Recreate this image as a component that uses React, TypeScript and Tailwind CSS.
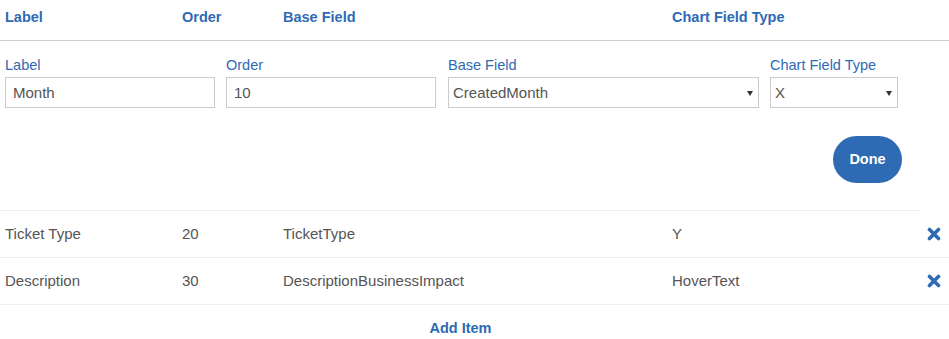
import React from 'react';

const blue = 'text-[#2f6ab4]';

const rows = [
  { label: 'Ticket Type', order: '20', base: 'TicketType', type: 'Y' },
  { label: 'Description', order: '30', base: 'DescriptionBusinessImpact', type: 'HoverText' },
];

const RemoveIcon = () => (
  <svg width="14" height="14" viewBox="0 0 14 14" className="block">
    <path d="M2.5 2.5 L11.5 11.5 M11.5 2.5 L2.5 11.5" stroke="#2f6ab4" strokeWidth="3.6" strokeLinecap="round" />
  </svg>
);

// small select arrow
const Caret = () => (
  <span className="absolute right-[5px] top-[13px] w-0 h-0 border-l-[3px] border-r-[3px] border-t-[5px] border-l-transparent border-r-transparent border-t-[#333]" />
);

export default function App() {
  return (
    <div className="w-[949px] h-[339px] bg-white font-['Liberation_Sans',Arial,sans-serif] overflow-hidden">
      {/* column headers */}
      <div className={`h-[41px] border-b border-[#cccccc] grid grid-cols-[177px_101px_389px_1fr] pl-[5px] pt-[8px] text-[14.5px] leading-[18px] font-bold ${blue}`}>
        <div>Label</div>
        <div>Order</div>
        <div>Base Field</div>
        <div>Chart Field Type</div>
      </div>

      {/* edit form */}
      <div className="pt-[14px] pl-[5px]">
        <div className="flex">
          <div className="w-[210px]">
            <div className={`text-[14.5px] leading-[20px] mb-[2px] ${blue}`}>Label</div>
            <input readOnly value="Month" className="w-full h-[31px] border border-[#cccccc] px-[7px] text-[15px] text-[#555] outline-none" />
          </div>
          <div className="w-[210px] ml-[11px]">
            <div className={`text-[14.5px] leading-[20px] mb-[2px] ${blue}`}>Order</div>
            <input readOnly value="10" className="w-full h-[31px] border border-[#cccccc] px-[7px] text-[15px] text-[#555] outline-none" />
          </div>
          <div className="w-[311px] ml-[12px]">
            <div className={`text-[14.5px] leading-[20px] mb-[2px] ${blue}`}>Base Field</div>
            <div className="relative h-[31px] border border-[#cccccc] px-[4px] text-[15px] leading-[30px] text-[#555]">
              CreatedMonth
              <Caret />
            </div>
          </div>
          <div className="w-[128px] ml-[11px]">
            <div className={`text-[14.5px] leading-[20px] mb-[2px] ${blue}`}>Chart Field Type</div>
            <div className="relative h-[31px] border border-[#cccccc] px-[4px] text-[15px] leading-[30px] text-[#555]">
              X
              <Caret />
            </div>
          </div>
        </div>
        <div className="flex justify-end mt-[28px] mr-[47px]">
          <button className="w-[69px] h-[47px] rounded-full bg-[#2f6ab4] text-white text-[14.5px] font-bold">Done</button>
        </div>
      </div>

      {/* saved items */}
      <div className="mt-[27px] w-[921px]">
        <div className="border-t border-[#eeeeee]" />
      </div>
      {rows.map((r) => (
        <div key={r.label} className="flex h-[47px] border-b border-[#eeeeee] items-center text-[15px] text-[#555]">
          <div className="w-[921px] grid grid-cols-[177px_101px_389px_1fr] pl-[5px]">
            <div>{r.label}</div>
            <div>{r.order}</div>
            <div>{r.base}</div>
            <div>{r.type}</div>
          </div>
          <div className="pl-[6px]">
            <RemoveIcon />
          </div>
        </div>
      ))}
      <div className={`w-[921px] h-[47px] flex items-center justify-center text-[14.5px] font-bold ${blue}`}>Add Item</div>
    </div>
  );
}
